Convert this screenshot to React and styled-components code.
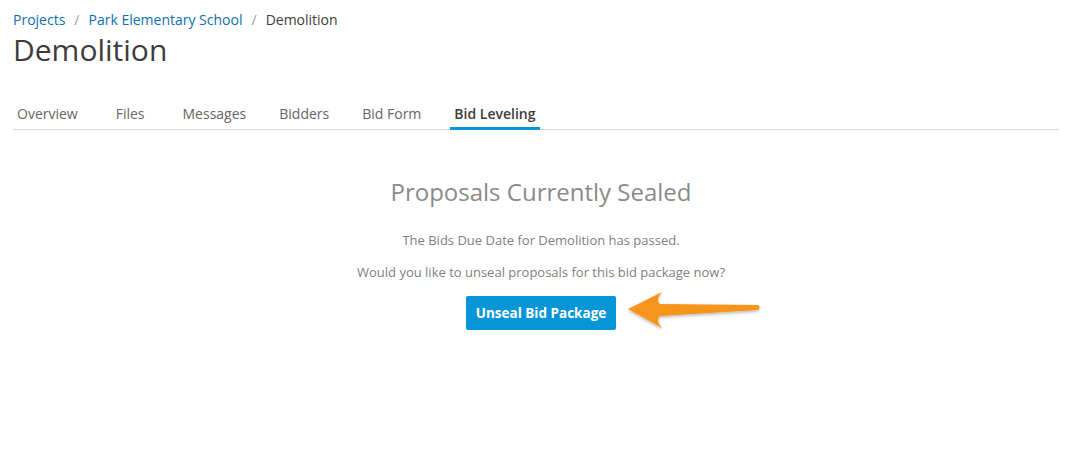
import React from "react";
import styled, { createGlobalStyle } from "styled-components";

const Global = createGlobalStyle`
  html, body { margin: 0; padding: 0; background: #fff; }
  body { font-family: "Open Sans", "Noto Sans", sans-serif; color: #3c3c3c; }
`;

const Page = styled.div`
  padding: 10px 11px 0 13px;
  width: 1070px;
  box-sizing: border-box;
`;

const Breadcrumb = styled.nav`
  display: flex;
  align-items: center;
  font-size: 14px;
  line-height: 20px;
  height: 20px;
`;

const Crumb = styled.a`
  color: ${(p) => (p.$current ? "#3c3c3c" : "#0f6fb5")};
  text-decoration: none;
`;

const Sep = styled.span`
  color: #9a9a9a;
  margin: 0 9px;
`;

const Title = styled.h1`
  margin: 0;
  font-size: 30px;
  font-weight: 400;
  line-height: 40px;
  color: #3c3c3c;
`;

const Tabs = styled.div`
  display: flex;
  margin-top: 33px;
  border-bottom: 1px solid #d9d9d9;
`;

const Tab = styled.div`
  margin-left: ${(p) => p.$space}px;
  padding: 0 4px 2px;
  font-size: 14px;
  line-height: 22px;
  font-weight: ${(p) => (p.$active ? 600 : 400)};
  color: ${(p) => (p.$active ? "#3c3c3c" : "#666")};
  border-bottom: 3px solid ${(p) => (p.$active ? "#0696d7" : "transparent")};
  margin-bottom: -1px;
`;

const Center = styled.div`
  display: flex;
  flex-direction: column;
  align-items: center;
  padding-left: 10px;
  padding-top: 46px;
`;

const Heading = styled.h2`
  margin: 0;
  font-size: 24px;
  font-weight: 400;
  line-height: 32px;
  color: #8a8a8a;
`;

const Para = styled.p`
  margin: ${(p) => p.$mt}px 0 0;
  font-size: 13px;
  line-height: 20px;
  color: #808080;
`;

const ButtonRow = styled.div`
  position: relative;
  margin-top: 14px;
`;

const Button = styled.button`
  background: #0696d7;
  color: #fff;
  border: none;
  border-radius: 2px;
  width: 150px;
  height: 34px;
  font-family: inherit;
  font-size: 13.5px;
  font-weight: 700;
  cursor: pointer;
`;

const Arrow = styled.svg`
  position: absolute;
  left: 160px;
  top: -8px;
  overflow: visible;
`;

const tabs = [
  { label: "Overview", space: 0 },
  { label: "Files", space: 30 },
  { label: "Messages", space: 30 },
  { label: "Bidders", space: 25 },
  { label: "Bid Form", space: 25 },
  { label: "Bid Leveling", space: 25 },
];

export default function App() {
  return (
    <Page>
      <Global />
      <Breadcrumb>
        <Crumb href="#">Projects</Crumb>
        <Sep>/</Sep>
        <Crumb href="#">Park Elementary School</Crumb>
        <Sep>/</Sep>
        <Crumb $current>Demolition</Crumb>
      </Breadcrumb>
      <Title>Demolition</Title>
      <Tabs>
        {tabs.map((t) => (
          <Tab key={t.label} $space={t.space} $active={t.label === "Bid Leveling"}>
            {t.label}
          </Tab>
        ))}
      </Tabs>
      <Center>
        <Heading>Proposals Currently Sealed</Heading>
        <Para $mt={22}>The Bids Due Date for Demolition has passed.</Para>
        <Para $mt={12}>Would you like to unseal proposals for this bid package now?</Para>
        <ButtonRow>
          <Button>Unseal Bid Package</Button>
          <Arrow width="140" height="44" viewBox="0 0 140 44">
            <defs>
              <filter id="sh" x="-20%" y="-40%" width="140%" height="180%">
                <feDropShadow dx="0" dy="1.5" stdDeviation="1.5" floodColor="#000" floodOpacity="0.3" />
              </filter>
            </defs>
            <path
              filter="url(#sh)"
              fill="#f7941d"
              d="M2,21 L36,4 Q29,12 34,16 L132,17 Q135,19 132,22 L34,28 Q29,32 36,40 Z"
            />
          </Arrow>
        </ButtonRow>
      </Center>
    </Page>
  );
}
